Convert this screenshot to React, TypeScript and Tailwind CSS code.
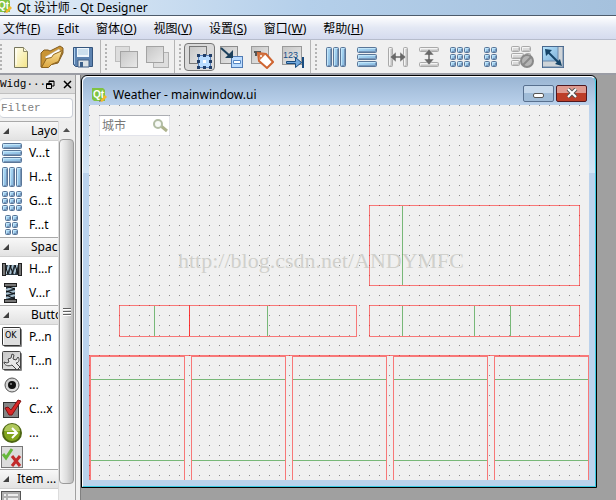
import React from 'react';

type IconProps = { children: React.ReactNode };

const Icon: React.FC<IconProps> = ({ children }) => (
  <svg viewBox="0 0 24 24" className="w-6 h-6 shrink-0" aria-hidden="true">
    {children}
  </svg>
);

const Bars: React.FC<{ rects: number[][]; gray?: boolean }> = ({ rects, gray }) => (
  <>
    {rects.map(([x, y, w, h]) => (
      <g key={`${x}-${y}`}>
        <rect
          x={x + 0.5}
          y={y + 0.5}
          width={w - 1}
          height={h - 1}
          rx="1"
          fill={gray ? '#dadada' : 'url(#blue)'}
          stroke={gray ? '#a9a9a9' : '#5a7698'}
        />
        <path d={`M${x + 1.5} ${y + h - 2}V${y + 1.5}H${x + w - 2}`} fill="none" stroke={gray ? '#f4f4f4' : '#c3e6fa'} />
        <path d={`M${x + w - 1.5} ${y + 2}V${y + h - 1.5}H${x + 2}`} fill="none" stroke={gray ? '#c4c4c4' : '#7797ba'} />
      </g>
    ))}
  </>
);

const cells = (xs: number[], ys: number[]) => ys.flatMap((y) => xs.map((x) => [x, y, 6, 6]));

const VLayout = () => (
  <Icon>
    <Bars rects={[[2, 2, 20, 6], [2, 9, 20, 6], [2, 16, 20, 6]]} />
  </Icon>
);

const HLayout = () => (
  <Icon>
    <Bars rects={[[2, 2, 6, 20], [9, 2, 6, 20], [16, 2, 6, 20]]} />
  </Icon>
);

const GridLayout = () => (
  <Icon>
    <Bars rects={cells([2, 9, 16], [2, 9, 16])} />
  </Icon>
);

const FormLayout = () => (
  <Icon>
    <Bars rects={cells([5, 12], [2, 9, 16])} />
  </Icon>
);

const HSplit = () => (
  <Icon>
    <Bars gray rects={[[2, 2, 5, 20], [17, 2, 5, 20]]} />
    <path d="M4 12l6-5v4h4V7l6 5-6 5v-4h-4v4z" fill="#686868" stroke="#efefef" strokeWidth=".5" />
  </Icon>
);

const VSplit = () => (
  <Icon>
    <Bars gray rects={[[2, 2, 20, 5], [2, 17, 20, 5]]} />
    <path d="M12 4l5 6h-4v4h4l-5 6-5-6h4v-4H7z" fill="#686868" stroke="#efefef" strokeWidth=".5" />
  </Icon>
);

const BreakLayout = () => (
  <Icon>
    <Bars gray rects={[[1, 1, 9, 6], [11, 1, 10, 6], [1, 8, 13, 6], [15, 8, 6, 6], [1, 15, 9, 6]]} />
    <circle cx="17" cy="16" r="6" fill="#b4b4b4" stroke="#898989" strokeWidth="2" />
    <path d="M13 20l8-8" stroke="#898989" strokeWidth="2" />
  </Icon>
);

const AdjustSize = () => (
  <Icon>
    <rect x="1.5" y="1.5" width="21" height="21" fill="#cfd4d8" stroke="#4a688d" />
    <rect x="2" y="2" width="15" height="14" fill="url(#blue)" />
    <path d="M17 2v14H2M22 2v20H2" fill="none" stroke="#6d89aa" />
    <path d="M7 7l11 11" stroke="#154468" strokeWidth="2" />
    <path d="M4 4l7 1-6 6zM21 21l-7-2 5-5z" fill="#154468" />
  </Icon>
);

const NewFile = () => (
  <Icon>
    <path d="M5.5 2.5h9l4 4v16h-13z" fill="url(#paper)" stroke="#77765d" />
    <path d="M14.5 2.5v4h4" fill="#fffbe0" stroke="#8e8b68" />
    <path d="M7 4v16" stroke="#fff" />
  </Icon>
);

const OpenFile = () => (
  <Icon>
    <path d="M1 22V8l3-3h4l2 1 10-5 3 2v5l-5 10z" fill="#c99434" stroke="#805a20" />
    <path d="M5 12l14-8 2 3-12 9z" fill="#fff" stroke="#aaa" strokeWidth=".5" />
    <path d="M1.5 22.5l5-9 5-1 2-3 9-4-4 11-7 3-3 3z" fill="url(#folder)" stroke="#8d641f" />
  </Icon>
);

const SaveFile = () => (
  <Icon>
    <path d="M2.5 2.5h19v19h-17l-2-2z" fill="#5d83b0" stroke="#35557d" />
    <path d="M6 3h12v9H6z" fill="#eef6fc" />
    <path d="M7 5h10M7 7h10M7 9h10" stroke="#a9c8de" />
    <path d="M7 15h11v7H7z" fill="#dce2e6" stroke="#426187" />
    <path d="M9 17h3v5H9z" fill="#3b5e88" />
    <path d="M3.5 3v16" stroke="#a6caec" />
  </Icon>
);

const BringFront = () => (
  <Icon>
    <rect x="1.5" y="1.5" width="14" height="15" fill="#dddddd" stroke="#bdbdbd" />
    <rect x="6.5" y="6.5" width="17" height="16" fill="url(#gray)" stroke="#a3a3a3" />
  </Icon>
);

const SendBack = () => (
  <Icon>
    <rect x="8.5" y="7.5" width="15" height="15" fill="#dedede" stroke="#b2b2b2" />
    <rect x="1.5" y="1.5" width="17" height="16" fill="url(#gray)" stroke="#a3a3a3" />
  </Icon>
);

const EditWidgets = () => (
  <Icon>
    <rect x="1.5" y="1.5" width="17" height="17" fill="url(#gray)" stroke="#777" />
    <rect x="10.5" y="10.5" width="12" height="12" fill="#b9dcff" stroke="#5b83bd" />
    <path d="M9 9h3v3H9zM15 9h3v3h-3zM21 9h3v3h-3zM9 15h3v3H9zM21 15h3v3h-3zM9 21h3v3H9zM15 21h3v3h-3zM21 21h3v3h-3z" fill="#213e68" />
    <path d="M15 15h3v3h-3z" fill="#fff" />
  </Icon>
);

const EditSignals = () => (
  <Icon>
    <rect x="1.5" y="1.5" width="17" height="17" fill="url(#gray)" stroke="#8c8c8c" />
    <rect x="12.5" y="11.5" width="11" height="11" fill="#bbdcff" stroke="#507bb5" />
    <path d="M14.5 15.5h7v3h-7z" fill="#fff" stroke="#5586c4" />
    <path d="M2 3l9 8" stroke="#1c405c" strokeWidth="2" />
    <path d="M14 5v8H6z" fill="#1c405c" />
  </Icon>
);

const EditBuddies = () => (
  <Icon>
    <rect x="1.5" y="1.5" width="17" height="17" fill="url(#gray)" stroke="#9a9a9a" />
    <path d="M4 7h7M6 7v4" fill="none" stroke="#555" strokeWidth="2" />
    <path d="M8 8l8 1 7 8-6 6-8-7z" fill="#fff" stroke="#cf6532" strokeWidth="2" />
    <path d="M8 8l8 1-6 6z" fill="#d17443" />
    <circle cx="11" cy="11" r="1" fill="#fff" />
  </Icon>
);

const EditTabOrder = () => (
  <Icon>
    <rect x="1.5" y="1.5" width="19" height="18" fill="url(#gray)" stroke="#999" />
    <text x="2" y="13" fontSize="9" fontFamily="Liberation Sans, sans-serif" fill="#174d87">123</text>
    <path d="M5.5 16.5h9v-4l6 5-6 5v-4h-9z" fill="#72a9dd" stroke="#194c80" />
    <path d="M22 12v11" stroke="#194c80" strokeWidth="2" />
  </Icon>
);

const HSpacer = () => (
  <Icon>
    <path d="M4 8h16v10H4z" fill="#27343e" />
    <path d="M6 17l3-9M10 17l3-9M14 17l3-9" stroke="#a9c2d2" strokeWidth="2" />
    <path d="M5 8l3 9M10 8l3 9M15 8l3 9" stroke="#111" />
    <rect x="2.5" y="6.500" width="3" height="12" fill="#777" stroke="#222" />
    <rect x="18.5" y="6.500" width="3" height="12" fill="#777" stroke="#222" />
  </Icon>
);

const VSpacer = () => (
  <Icon>
    <path d="M6 4h9v16H6z" fill="#27343e" />
    <path d="M6 9l9-3M6 13l9-3M6 17l9-3" stroke="#a9c2d2" strokeWidth="2" />
    <path d="M6 5l9 3M6 10l9 3M6 14l9 4" stroke="#111" />
    <rect x="4.5" y="2.5" width="12" height="3" fill="#777" stroke="#222" />
    <rect x="4.5" y="18.5" width="12" height="3" fill="#777" stroke="#222" />
  </Icon>
);

const PushButton = () => (
  <Icon>
    <rect x="4" y="4" width="18" height="18" rx="1" fill="#888" />
    <rect x="2.5" y="2.5" width="18" height="18" rx="1" fill="#dedede" stroke="#333" />
    <path d="M3.5 19V3.500H19" fill="none" stroke="#fff" />
    <text x="5" y="13" fontSize="8" fontFamily="DejaVu Sans, sans-serif" fill="#000">OK</text>
  </Icon>
);

const ToolButton = () => (
  <Icon>
    <rect x="4" y="4" width="18" height="18" rx="1" fill="#888" />
    <rect x="2.5" y="2.5" width="18" height="18" rx="1" fill="url(#gray)" stroke="#444" />
    <path d="M12 5l2 1-1 4 3 1 2-3c2 2 1 6-2 6l4 4-3 3-5-5c-4 2-8 0-8-3l3 1 2-1-1-3 3-1z" fill="#e8e8e8" stroke="#444" />
  </Icon>
);

const RadioButton = () => (
  <Icon>
    <circle cx="12" cy="12" r="7" fill="url(#gray)" stroke="#555" />
    <circle cx="12" cy="12" r="4" fill="#111" />
    <circle cx="11" cy="11" r="1" fill="#888" />
  </Icon>
);

const CheckBox = () => (
  <Icon>
    <rect x="3.5" y="5.500" width="15" height="15" fill="#858585" stroke="#333" />
    <path d="M5 11l3-1 3 3 7-10 3 1-9 14H9z" fill="#d82626" stroke="#801313" />
  </Icon>
);

const CommandLink = () => (
  <Icon>
    <circle cx="12" cy="12" r="9" fill="#82a51c" stroke="#4d6613" strokeWidth="2" />
    <path d="M4 10a8 7 0 0 1 16 0z" fill="#aec75b" />
    <path d="M7 12h9M12 7l5 5-5 5" fill="none" stroke="#fff" strokeWidth="2" />
  </Icon>
);

const ButtonBox = () => (
  <Icon>
    <rect x="1.5" y="1.5" width="21" height="21" fill="#dcdcdc" stroke="#777" />
    <path d="M3 9l3 4 6-9" fill="none" stroke="#65b83b" strokeWidth="3" />
    <path d="M12 11l8 10M20 11l-8 10" stroke="#c22b2b" strokeWidth="3" />
  </Icon>
);

const ListView = () => (
  <Icon>
    <rect x="1.5" y="2.5" width="19" height="20" fill="#b0b0b0" stroke="#555" />
    <path d="M4 6h2M4 10h2M4 14h2M8 6h10M8 10h10M8 14h10" stroke="#eee" strokeWidth="2" />
  </Icon>
);

const QtLogo = () => (
  <svg viewBox="0 0 16 16" className="w-4 h-4 shrink-0" aria-hidden="true">
    <path d="M1 1h11l2 2v11H3l-2-2z" fill="#80c342" />
    <text x="2" y="11" fontSize="10" fontWeight="bold" fontFamily="Liberation Sans, sans-serif" fill="#fff">Qt</text>
    <path d="M9 14l5-6 2 2-5 5z" fill="#f5b72a" />
    <path d="M8 15l1-2 1 1z" fill="#654" />
  </svg>
);

const menus = [
  { label: '文件', mnemonic: 'F' },
  { label: 'Edit', mnemonic: '' },
  { label: '窗体', mnemonic: 'O' },
  { label: '视图', mnemonic: 'V' },
  { label: '设置', mnemonic: 'S' },
  { label: '窗口', mnemonic: 'W' },
  { label: '帮助', mnemonic: 'H' },
];

const toolGroups = [
  [
    { name: 'New', icon: <NewFile /> },
    { name: 'Open', icon: <OpenFile /> },
    { name: 'Save', icon: <SaveFile /> },
  ],
  [
    { name: 'Bring to Front', icon: <BringFront /> },
    { name: 'Send to Back', icon: <SendBack /> },
  ],
  [
    { name: 'Edit Widgets', icon: <EditWidgets />, active: true },
    { name: 'Edit Signals/Slots', icon: <EditSignals /> },
    { name: 'Edit Buddies', icon: <EditBuddies /> },
    { name: 'Edit Tab Order', icon: <EditTabOrder /> },
  ],
  [
    { name: 'Lay Out Horizontally', icon: <HLayout /> },
    { name: 'Lay Out Vertically', icon: <VLayout /> },
    { name: 'Horizontal Splitter', icon: <HSplit /> },
    { name: 'Vertical Splitter', icon: <VSplit /> },
    { name: 'Lay Out in a Grid', icon: <GridLayout /> },
    { name: 'Lay Out in a Form', icon: <FormLayout /> },
    { name: 'Break Layout', icon: <BreakLayout /> },
    { name: 'Adjust Size', icon: <AdjustSize /> },
  ],
];

const widgetGroups = [
  {
    title: 'Layo',
    items: [
      { label: 'V...t', icon: <VLayout /> },
      { label: 'H...t', icon: <HLayout /> },
      { label: 'G...t', icon: <GridLayout /> },
      { label: 'F...t', icon: <FormLayout /> },
    ],
  },
  {
    title: 'Spac',
    items: [
      { label: 'H...r', icon: <HSpacer /> },
      { label: 'V...r', icon: <VSpacer /> },
    ],
  },
  {
    title: 'Butto',
    items: [
      { label: 'P...n', icon: <PushButton /> },
      { label: 'T...n', icon: <ToolButton /> },
      { label: '...', icon: <RadioButton /> },
      { label: 'C...x', icon: <CheckBox /> },
      { label: '...', icon: <CommandLink /> },
      { label: '...', icon: <ButtonBox /> },
    ],
  },
  { title: 'Item ...', items: [{ label: '', icon: <ListView /> }] },
];

const Gradients = () => (
  <svg className="absolute w-0 h-0" aria-hidden="true">
    <defs>
      <linearGradient id="blue" x1="0" y1="0" x2="1" y2="1">
        <stop offset="0" stopColor="#b5e2fb" />
        <stop offset="1" stopColor="#7fb0d9" />
      </linearGradient>
      <linearGradient id="gray" x1="0" y1="0" x2="1" y2="1">
        <stop offset="0" stopColor="#c6c6c6" />
        <stop offset="1" stopColor="#e9e9e9" />
      </linearGradient>
      <linearGradient id="paper" x1="0" y1="0" x2="1" y2="1">
        <stop offset="0" stopColor="#fffef0" />
        <stop offset="1" stopColor="#f3e487" />
      </linearGradient>
      <linearGradient id="folder" x1="0" y1="0" x2="0" y2="1">
        <stop offset="0" stopColor="#fbe29a" />
        <stop offset="1" stopColor="#dba63f" />
      </linearGradient>
    </defs>
  </svg>
);

const MenuBar = () => (
  <nav className="flex h-6 shrink-0 items-center gap-[17px] border-b border-[#b6bccc] bg-linear-to-b from-white via-[#e3e8f4] to-[#d5dbee] pl-[3px] text-xs whitespace-nowrap">
    {menus.map(({ label, mnemonic }) => (
      <button key={label} className="pt-0.5 leading-4">
        {mnemonic ? (
          <>
            {label}(<span className="underline">{mnemonic}</span>)
          </>
        ) : (
          <>
            <span className="underline">E</span>dit
          </>
        )}
      </button>
    ))}
  </nav>
);

const ToolBar = () => (
  <div className="flex h-[33px] shrink-0 bg-[#f0f0f0]">
    {toolGroups.map((group, i) => (
      <div key={i} className="flex items-center border-r border-[#b5b5b5] pr-0.5 last:border-0">
        <div className={i === 0 ? 'w-[5px] py-1' : 'w-[9px] py-1 pl-1'}>
          <div className="h-[26px] w-0.5 bg-[repeating-linear-gradient(to_bottom,#b4b4b4_0_2px,transparent_2px_4px)]" />
        </div>
        {group.map((tool) => (
          <button
            key={tool.name}
            aria-label={tool.name}
            className={
              'active' in tool
                ? 'flex h-7 w-[31px] items-center justify-center rounded-sm border border-[#777] bg-[#dadada]'
                : 'flex h-7 w-[31px] items-center justify-center'
            }
          >
            {tool.icon}
          </button>
        ))}
      </div>
    ))}
  </div>
);

const WidgetBox = () => (
  <aside className="flex w-[76px] shrink-0 flex-col border-r border-[#a0a0a0] bg-[#f0f0f0]">
    <div className="flex h-[19px] shrink-0 items-center border-b border-[#c0c0c0] bg-[#dcdcdc] font-[Liberation_Mono,monospace] text-[11px]">
      <span className="flex-1">Widg···</span>
      <button aria-label="Float" className="mr-2">
        <svg viewBox="0 0 9 9" className="h-[9px] w-[9px]">
          <path d="M3 3V1h5v5H6M3 1.5h5" fill="none" stroke="#000" />
          <path d="M.5 3.5h5v5h-5zM1 4.5h4" fill="none" stroke="#000" />
        </svg>
      </button>
      <button aria-label="Close" className="mr-1">
        <svg viewBox="0 0 9 9" className="h-[9px] w-[9px]">
          <path d="M1 1l7 7M8 1L1 8" stroke="#000" strokeWidth="1.5" />
        </svg>
      </button>
    </div>
    <input
      aria-label="Filter"
      placeholder="Filter"
      className="mt-1 mr-0.5 mb-[3px] h-5 min-w-0 shrink-0 rounded-sm border border-l-0 border-[#ccd0d8] bg-white pl-px font-[Liberation_Mono,monospace] text-[11px] placeholder:text-[#808080]"
    />
    <div className="flex min-h-0 flex-1">
      <div className="min-w-0 flex-1 overflow-hidden bg-white">
        {widgetGroups.map((group) => (
          <section key={group.title}>
            <button className="flex h-5 w-full items-center border-y border-t-[#a9a9a9] border-b-[#cfcfcf] bg-linear-to-b from-[#f8f8f8] to-[#e2e2e2] pl-[3px] text-xs whitespace-nowrap">
              <svg viewBox="0 0 6 6" className="h-1.5 w-1.5 shrink-0">
                <path d="M6 0v6H0z" fill="#404040" />
              </svg>
              <span className={group.title === 'Item ...' ? 'pl-2' : 'pl-[22px]'}>{group.title}</span>
            </button>
            {group.items.map((item, i) => (
              <button key={i} className="flex h-6 w-full items-center gap-[5px] text-xs whitespace-nowrap">
                {item.icon}
                {item.label}
              </button>
            ))}
          </section>
        ))}
      </div>
      <div className="mr-px flex w-4 shrink-0 flex-col border-l border-[#dcdcdc] bg-[#eeeeee] pb-4">
        <button aria-label="Scroll up" className="flex h-[18px] shrink-0 items-center justify-center">
          <svg viewBox="0 0 7 4" className="h-1 w-[7px]">
            <path d="M0 4l3.5-4L7 4z" fill="#505050" />
          </svg>
        </button>
        <div className="flex flex-1 flex-col items-center justify-center gap-px rounded-sm border border-[#9a9a9a] bg-linear-to-r from-[#f5f5f5] via-[#dedede] to-[#bcbcbc]">
          <div className="h-0.5 w-2 border-b border-white bg-[#606060]" />
          <div className="h-0.5 w-2 border-b border-white bg-[#606060]" />
          <div className="h-0.5 w-2 border-b border-white bg-[#606060]" />
        </div>
      </div>
    </div>
  </aside>
);

// Layout outlines on the form: position, size and the inner dividers
const outlines = [
  { box: 'left-[280px] top-[100px] w-[211px] h-[81px]', lines: ['left-8 bg-[#008000]/50'] },
  {
    box: 'left-[30px] top-[200px] w-[238px] h-8',
    lines: ['left-[34px] bg-[#008000]/50', 'left-[69px] bg-[#ff0000]/75', 'left-[147px] bg-[#008000]/50'],
  },
  {
    box: 'left-[280px] top-[200px] w-[211px] h-8',
    lines: ['left-8 bg-[#008000]/50', 'left-[104px] bg-[#008000]/50', 'left-[140px] bg-[#008000]/50'],
  },
];

const FormCanvas = () => (
  <div className="relative h-[375px] overflow-hidden bg-[#f0f0f0] bg-[linear-gradient(to_right,transparent_1px,#f0f0f0_1px),linear-gradient(to_bottom,#8c8c8c_1px,transparent_1px)] bg-size-[10px_10px]">
    <div className="absolute top-2.5 left-2.5 flex h-[21px] w-[71px] items-center rounded-xs border border-[#e2e3ea] border-t-[#abadb3] bg-white pr-px pl-0.5">
      <input
        aria-label="城市"
        placeholder="城市"
        className="w-full min-w-0 bg-transparent text-xs outline-none placeholder:text-[#777]"
      />
      <svg viewBox="0 0 16 14" className="h-3.5 w-4 shrink-0" aria-hidden="true">
        <path d="M9 7l6 5" stroke="#adb28d" strokeWidth="3" />
        <circle cx="6" cy="5" r="4" fill="#f7faf7" stroke="#b2bda5" strokeWidth="2" />
      </svg>
    </div>
    <span className="absolute top-[142px] left-[89px] font-[Liberation_Serif,serif] text-[22px] leading-7 text-[#d0d0cc]">
      http://blog.csdn.net/ANDYMFC
    </span>
    {outlines.map(({ box, lines }) => (
      <div key={box} className={`absolute border border-[#ff0000]/50 ${box}`}>
        {lines.map((line) => (
          <div key={line} className={`absolute inset-y-0 w-px ${line}`} />
        ))}
      </div>
    ))}
    <div className="absolute inset-x-0 top-[250px] bottom-0 grid grid-cols-5 gap-1.5 border-t border-l border-[#ff0000]/50">
      {[0, 1, 2, 3, 4].map((day) => (
        <div key={day} className="flex flex-col border border-b-0 border-[#ff0000]/50">
          <div className="h-[23px] border-b border-[#008000]/50" />
          <div className="h-[81px] border-b border-[#008000]/50" />
        </div>
      ))}
    </div>
  </div>
);

const FormWindow = () => (
  <section className="mr-[19px] min-w-0 flex-1 self-start rounded-t-md border border-black bg-[#bad2ec]">
    <div className="rounded-t-md border border-t-white border-r-[#38c8e0] border-b-[#38c8e0] border-l-white bg-[linear-gradient(to_bottom,#9ab5d3_0,#bad1eb_28px,#d3e5f5_96px,#bad2ec_96px)] px-1.5 pb-1.5">
      <header className="flex h-7 items-center gap-1.5 pt-2 pl-0.5">
        <QtLogo />
        <h2 className="flex-1 text-xs leading-4 whitespace-nowrap">Weather - mainwindow.ui</h2>
        <div className="flex gap-0.5 pr-0.5 pb-1">
          <button
            aria-label="Minimize"
            className="flex h-[17px] w-[31px] items-center justify-center rounded-xs border border-[#58708f] bg-linear-to-b from-[#c5d8ec] from-50% to-[#a0bcd8] to-50% pt-1"
          >
            <span className="h-[5px] w-[11px] rounded-xs border border-[#555] bg-white" />
          </button>
          <button
            aria-label="Close form"
            className="flex h-[17px] w-[31px] items-center justify-center rounded-xs border border-[#501820] bg-linear-to-b from-[#df9a90] from-50% to-[#bd3e28] to-50%"
          >
            <svg viewBox="0 0 12 10" className="h-2.5 w-3">
              <path d="M2 1l8 8M10 1L2 9" stroke="#555" strokeWidth="4" />
              <path d="M2 1l8 8M10 1L2 9" stroke="#fff" strokeWidth="2" />
            </svg>
          </button>
        </div>
      </header>
      <FormCanvas />
    </div>
  </section>
);

export default function App() {
  return (
    <div className="flex h-screen flex-col overflow-hidden bg-[#f0f0f0] font-[Noto_Sans,Noto_Sans_CJK_SC,sans-serif] text-black">
      <Gradients />
      <header className="flex h-4 shrink-0 items-center gap-[5px] border-b border-[#4e5c6c] bg-linear-to-r from-[#e3edf7] via-[#b4cfea] to-[#a5c1dd] pr-2">
        <span className="-ml-1 pb-1">
          <QtLogo />
        </span>
        <h1 className="text-xs leading-3.5 whitespace-nowrap">Qt 设计师 - Qt Designer</h1>
      </header>
      <MenuBar />
      <ToolBar />
      <div className="flex min-h-0 flex-1 border-t-2 border-[#9a9ca4]">
        <WidgetBox />
        <main className="ml-1 flex min-w-0 flex-1 border-l border-[#808080] bg-[#a0a0a0]">
          <FormWindow />
        </main>
      </div>
    </div>
  );
}
